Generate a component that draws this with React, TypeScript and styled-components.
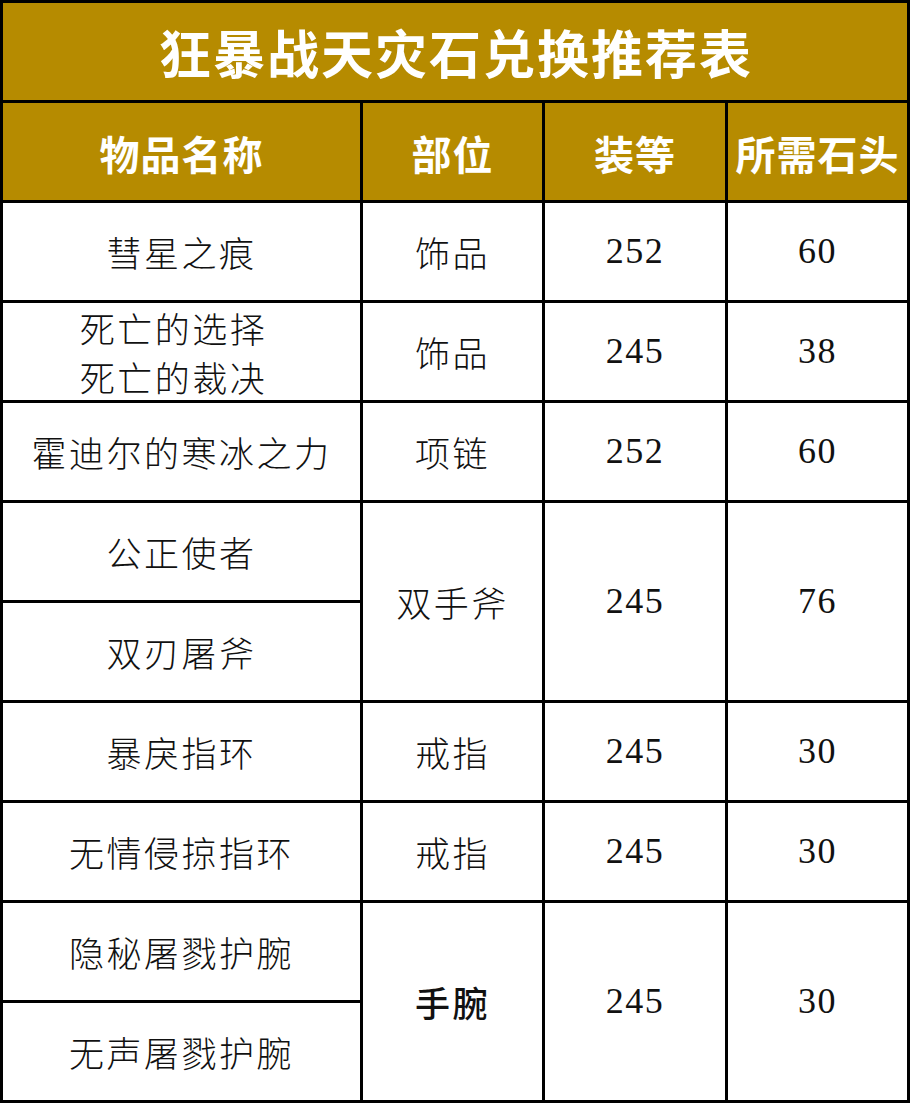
import React from "react";
import styled, { createGlobalStyle } from "styled-components";

const Global = createGlobalStyle`
  html, body { margin: 0; padding: 0; background: #ffffff; }
  body { font-family: "Noto Sans CJK SC", "Noto Sans", sans-serif; }
`;

const GOLD = "#b68b00";

const Table = styled.div`
  width: 910px;
  height: 1103px;
  box-sizing: border-box;
  display: grid;
  grid-template-columns: 357px 179px 180px 179px;
  grid-auto-rows: 97px;
  gap: 3px;
  padding: 3px;
  background: #000000;
`;

const Title = styled.div`
  grid-column: 1 / -1;
  background: ${GOLD};
  color: #ffffff;
  display: flex;
  align-items: center;
  justify-content: center;
  font-family: "Noto Sans CJK SC", sans-serif;
  font-weight: 700;
  font-size: 52px;
  letter-spacing: 2px;
  padding-left: 2px;
`;

const Head = styled.div`
  background: ${GOLD};
  color: #ffffff;
  display: flex;
  align-items: center;
  justify-content: center;
  font-family: "Noto Sans CJK SC", sans-serif;
  font-weight: 700;
  font-size: 40px;
  letter-spacing: 1px;
  padding-top: 2px;
`;

const Cell = styled.div<{ $span?: number; $num?: boolean; $strong?: boolean; $offset?: boolean }>`
  background: #ffffff;
  color: #111111;
  grid-row: ${(p) => (p.$span ? `span ${p.$span}` : "auto")};
  display: flex;
  flex-direction: column;
  align-items: center;
  justify-content: center;
  text-align: center;
  font-family: ${(p) =>
    p.$num
      ? `"Liberation Serif", "Noto Sans CJK SC", serif`
      : `"Noto Sans CJK SC", sans-serif`};
  font-weight: ${(p) => (p.$strong ? 500 : 300)};
  font-size: ${(p) => (p.$num ? "36px" : "35px")};
  line-height: 1.4;
  letter-spacing: ${(p) => (p.$num ? "1.5px" : "2.5px")};
  padding-right: ${(p) => (p.$offset ? "16px" : "0")};
`;

type Row = {
  names: string[];
  part?: string;
  level?: string;
  stones?: string;
  span?: number;
  strong?: boolean;
};

const rows: Row[] = [
  { names: ["彗星之痕"], part: "饰品", level: "252", stones: "60" },
  { names: ["死亡的选择", "死亡的裁决"], part: "饰品", level: "245", stones: "38" },
  { names: ["霍迪尔的寒冰之力"], part: "项链", level: "252", stones: "60" },
  { names: ["公正使者"], part: "双手斧", level: "245", stones: "76", span: 2 },
  { names: ["双刃屠斧"] },
  { names: ["暴戾指环"], part: "戒指", level: "245", stones: "30" },
  { names: ["无情侵掠指环"], part: "戒指", level: "245", stones: "30" },
  { names: ["隐秘屠戮护腕"], part: "手腕", level: "245", stones: "30", span: 2, strong: true },
  { names: ["无声屠戮护腕"] },
];

export default function App() {
  return (
    <>
      <Global />
      <Table>
        <Title>狂暴战天灾石兑换推荐表</Title>
        <Head>物品名称</Head>
        <Head>部位</Head>
        <Head>装等</Head>
        <Head>所需石头</Head>
        {rows.map((r, i) => (
          <React.Fragment key={i}>
            <Cell $offset={r.names.length > 1}>
              {r.names.map((n) => (
                <span key={n}>{n}</span>
              ))}
            </Cell>
            {r.part && (
              <>
                <Cell $span={r.span} $strong={r.strong}>
                  {r.part}
                </Cell>
                <Cell $span={r.span} $num>
                  {r.level}
                </Cell>
                <Cell $span={r.span} $num>
                  {r.stones}
                </Cell>
              </>
            )}
          </React.Fragment>
        ))}
      </Table>
    </>
  );
}
